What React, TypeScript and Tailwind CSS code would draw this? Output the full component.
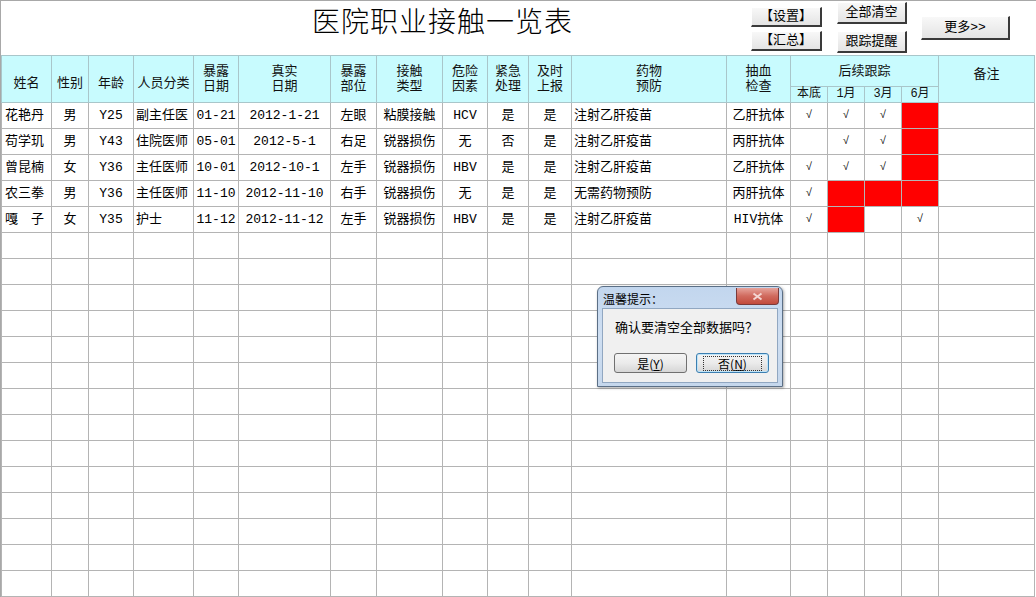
import type { ReactNode } from 'react'

type Track = '' | '√' | 'R'

type Row = {
    name: string
    sex: string
    age: string
    role: string
    date: string
    realDate: string
    part: string
    kind: string
    risk: string
    urgent: string
    report: string
    drug: string
    blood: string
    track: Track[]
}

const rows: Row[] = [
    { name: '花艳丹', sex: '男', age: 'Y25', role: '副主任医', date: '01-21', realDate: '2012-1-21', part: '左眼', kind: '粘膜接触', risk: 'HCV', urgent: '是', report: '是', drug: '注射乙肝疫苗', blood: '乙肝抗体', track: ['√', '√', '√', 'R'] },
    { name: '苟学玑', sex: '男', age: 'Y43', role: '住院医师', date: '05-01', realDate: '2012-5-1', part: '右足', kind: '锐器损伤', risk: '无', urgent: '否', report: '是', drug: '注射乙肝疫苗', blood: '丙肝抗体', track: ['', '√', '√', 'R'] },
    { name: '曾昆楠', sex: '女', age: 'Y36', role: '主任医师', date: '10-01', realDate: '2012-10-1', part: '左手', kind: '锐器损伤', risk: 'HBV', urgent: '是', report: '是', drug: '注射乙肝疫苗', blood: '乙肝抗体', track: ['√', '√', '√', 'R'] },
    { name: '农三拳', sex: '男', age: 'Y36', role: '主任医师', date: '11-10', realDate: '2012-11-10', part: '右手', kind: '锐器损伤', risk: '无', urgent: '是', report: '是', drug: '无需药物预防', blood: '丙肝抗体', track: ['√', 'R', 'R', 'R'] },
    { name: '嘎　子', sex: '女', age: 'Y35', role: '护士', date: '11-12', realDate: '2012-11-12', part: '左手', kind: '锐器损伤', risk: 'HBV', urgent: '是', report: '是', drug: '注射乙肝疫苗', blood: 'HIV抗体', track: ['√', 'R', '', '√'] },
]

const widths = [50, 37, 45, 60, 45, 92, 46, 66, 45, 41, 43, 155, 64, 37, 37, 37, 37, 96]
const EMPTY_ROWS = 14

const cell = 'border border-[#b4b4b4] h-[26px] p-0 align-middle whitespace-nowrap overflow-hidden'
const head = 'border border-[#a9c6ca] bg-[#c8fbfe] p-0 font-normal leading-[15px] text-center align-middle text-[#111]'

function OldButton({ children, className }: { children: ReactNode; className: string }) {
    return (
        <div className={`flex items-center justify-center bg-gradient-to-b from-[#f8f8f8] to-[#e4e4e4] border-t border-l border-t-white border-l-white border-r-2 border-b-2 border-r-[#3a3a3a] border-b-[#3a3a3a] text-[13px] text-black ${className}`}>
            {children}
        </div>
    )
}

function DialogButton({ children, focused }: { children: ReactNode; focused?: boolean }) {
    return (
        <div className={`flex h-[20px] w-[73px] items-center justify-center rounded-[3px] border bg-gradient-to-b from-[#f4f4f4] via-[#ebebeb] to-[#d6d6d6] text-[12px] text-black ${focused ? 'border-[#3c7fb1] shadow-[inset_0_0_0_1px_#bfe4f8]' : 'border-[#707070]'}`}>
            <span className={focused ? 'px-[14px] outline outline-1 outline-dotted outline-[#333] leading-[13px]' : 'leading-[13px]'}>{children}</span>
        </div>
    )
}

export default function App() {
    return (
        <div
            className="relative h-[597px] w-[1036px] overflow-hidden border-l border-t border-[#a8a8a8] bg-white text-black"
            style={{ fontFamily: '"Liberation Mono", "Noto Sans CJK SC", monospace' }}
        >
            <div className="flex h-[54px]">
                <div className="w-[750px] pl-[311px] pt-[4px] text-[28px] font-light leading-[36px] tracking-[1px]" style={{ fontFamily: '"Liberation Serif", "Noto Sans CJK SC", serif' }}>
                    医院职业接触一览表
                </div>
                <div className="flex w-[71px] flex-col gap-[4px] pt-[6px]">
                    <OldButton className="h-[20px]">【设置】</OldButton>
                    <OldButton className="h-[20px]">【汇总】</OldButton>
                </div>
                <div className="ml-[15px] flex w-[70px] flex-col gap-[7px] pt-[1px]">
                    <OldButton className="h-[22px]">全部清空</OldButton>
                    <OldButton className="h-[22px]">跟踪提醒</OldButton>
                </div>
                <div className="ml-[14px] pt-[15px]">
                    <OldButton className="h-[24px] w-[89px]">更多&gt;&gt;</OldButton>
                </div>
            </div>

            <table className="table-fixed border-collapse text-[13px]" style={{ width: 1034 }}>
                <colgroup>
                    {widths.map((w, i) => (
                        <col key={i} style={{ width: w }} />
                    ))}
                </colgroup>
                <thead>
                    <tr className="h-[31px]">
                        <th rowSpan={2} className={`${head} pt-[8px]`}>姓名</th>
                        <th rowSpan={2} className={`${head} pt-[8px]`}>性别</th>
                        <th rowSpan={2} className={`${head} pt-[8px]`}>年龄</th>
                        <th rowSpan={2} className={`${head} pt-[8px]`}>人员分类</th>
                        <th rowSpan={2} className={head}>暴露<br />日期</th>
                        <th rowSpan={2} className={head}>真实<br />日期</th>
                        <th rowSpan={2} className={head}>暴露<br />部位</th>
                        <th rowSpan={2} className={head}>接触<br />类型</th>
                        <th rowSpan={2} className={head}>危险<br />因素</th>
                        <th rowSpan={2} className={head}>紧急<br />处理</th>
                        <th rowSpan={2} className={head}>及时<br />上报</th>
                        <th rowSpan={2} className={head}>药物<br />预防</th>
                        <th rowSpan={2} className={head}>抽血<br />检查</th>
                        <th colSpan={4} className={head}>后续跟踪</th>
                        <th rowSpan={2} className={`${head} pb-[10px]`}>备注</th>
                    </tr>
                    <tr className="h-[13px]">
                        {['本底', '1月', '3月', '6月'].map((t) => (
                            <th key={t} className={`${head} h-[13px] text-[12px] leading-[12px]`}>{t}</th>
                        ))}
                    </tr>
                </thead>
                <tbody>
                    {rows.map((r) => (
                        <tr key={r.name}>
                            <td className={`${cell} pl-[3px]`}>{r.name}</td>
                            <td className={`${cell} text-center`}>{r.sex}</td>
                            <td className={`${cell} text-center`}>{r.age}</td>
                            <td className={`${cell} pl-[2px]`}>{r.role}</td>
                            <td className={`${cell} text-center`}>{r.date}</td>
                            <td className={`${cell} text-center`}>{r.realDate}</td>
                            <td className={`${cell} text-center`}>{r.part}</td>
                            <td className={`${cell} text-center`}>{r.kind}</td>
                            <td className={`${cell} text-center`}>{r.risk}</td>
                            <td className={`${cell} text-center`}>{r.urgent}</td>
                            <td className={`${cell} text-center`}>{r.report}</td>
                            <td className={`${cell} pl-[2px]`}>{r.drug}</td>
                            <td className={`${cell} text-center`}>{r.blood}</td>
                            {r.track.map((t, i) => (
                                <td key={i} className={`${cell} text-center text-[11px] ${t === 'R' ? 'bg-[#ff0000]' : ''}`}>
                                    {t === '√' ? '√' : ''}
                                </td>
                            ))}
                            <td className={cell}></td>
                        </tr>
                    ))}
                    {Array.from({ length: EMPTY_ROWS }).map((_, i) => (
                        <tr key={`e${i}`}>
                            {widths.map((_, j) => (
                                <td key={j} className={cell}></td>
                            ))}
                        </tr>
                    ))}
                </tbody>
            </table>

            {/* confirm dialog */}
            <div className="absolute left-[596px] top-[285px] h-[101px] w-[186px] rounded-t-[6px] border border-[#5b6f86] bg-gradient-to-b from-[#c2d6ee] via-[#cfdff2] to-[#c5d7ec] p-[1px] shadow-[1px_1px_3px_rgba(0,0,0,0.35)]">
                <div className="flex h-[19px] items-start justify-between">
                    <span className="pl-[4px] pt-[4px] text-[12px] leading-[13px]" style={{ fontFamily: '"Noto Sans CJK SC", sans-serif' }}>温馨提示：</span>
                    <div className="mr-[2px] flex h-[17px] w-[43px] items-center justify-center rounded-b-[4px] border border-t-0 border-[#7a3a3a] bg-gradient-to-b from-[#e6a49c] via-[#d06a5e] to-[#c24a3c]">
                        <svg width="11" height="9" viewBox="0 0 11 9">
                            <path d="M1.5 1.5 L9.5 7.5 M9.5 1.5 L1.5 7.5" stroke="#f3d6d2" strokeWidth="2" />
                        </svg>
                    </div>
                </div>
                <div className="mx-[3px] mt-[1px] flex h-[75px] flex-col border border-[#91a7c1] bg-[#f0f0f0]" style={{ fontFamily: '"Noto Sans CJK SC", sans-serif' }}>
                    <div className="pl-[12px] pt-[10px] text-[13px] leading-[16px]">确认要清空全部数据吗？</div>
                    <div className="mt-[18px] flex gap-[9px] pl-[11px]">
                        <DialogButton>是(<span className="underline">Y</span>)</DialogButton>
                        <DialogButton focused>否(<span className="underline">N</span>)</DialogButton>
                    </div>
                </div>
            </div>
        </div>
    )
}
